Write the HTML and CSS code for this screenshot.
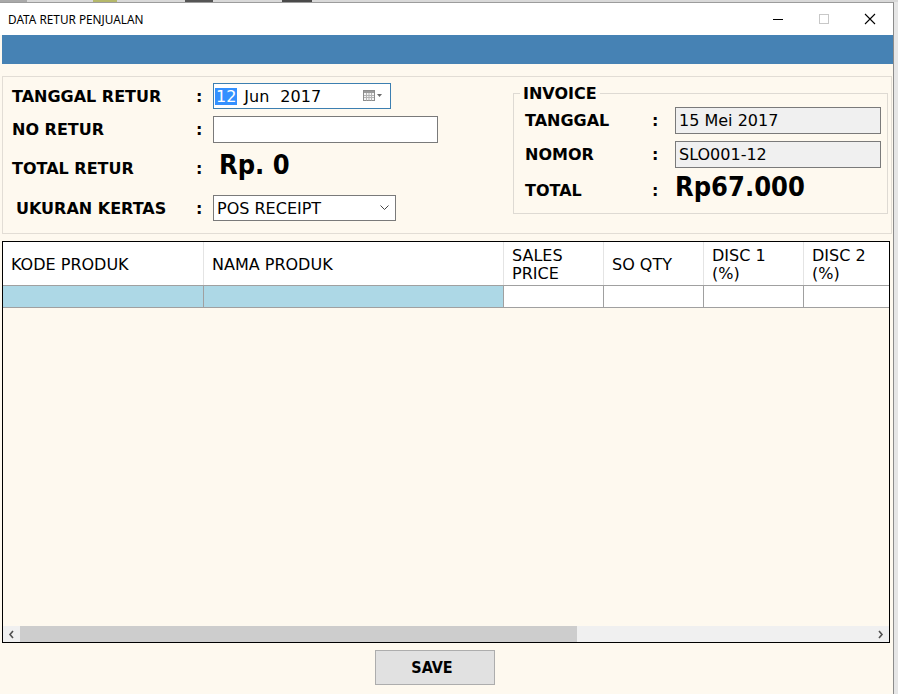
FILE: index.html
```html
<!DOCTYPE html>
<html>
<head>
<meta charset="utf-8">
<title>DATA RETUR PENJUALAN</title>
<link rel="stylesheet" href="styles.css">
</head>
<body>
<div class="desk">
  <span class="blob b1"></span><span class="blob b2"></span><span class="blob b3"></span><span class="blob b4"></span>
</div>
<div class="window">
  <div class="titlebar">
    <span class="title">DATA RETUR PENJUALAN</span>
    <div class="controls">
      <span class="ctl"><svg width="12" height="12" viewBox="0 0 12 12"><line x1="1" y1="6.5" x2="11" y2="6.5" stroke="#000" stroke-width="1"/></svg></span>
      <span class="ctl"><svg width="12" height="12" viewBox="0 0 12 12"><rect x="1.5" y="1.5" width="9" height="9" fill="none" stroke="#c8c8c8" stroke-width="1"/></svg></span>
      <span class="ctl"><svg width="12" height="12" viewBox="0 0 12 12"><path d="M1 1 L11 11 M11 1 L1 11" stroke="#000" stroke-width="1.1"/></svg></span>
    </div>
  </div>
  <div class="client">
    <div class="bluebar"></div>
    <div class="panel">
      <div class="left">
        <div class="row r1">
          <span class="lbl">TANGGAL RETUR</span><span class="colon">:</span>
          <div class="date">
            <span class="sel">12</span><span class="mon">Jun</span><span class="yr">2017</span>
            <span class="cal">
              <svg width="20" height="12" viewBox="0 0 20 12">
                <rect x="0.5" y="0.5" width="11" height="10" fill="#f4f4f4" stroke="#8c8c8c"/>
                <rect x="1" y="1" width="10" height="2" fill="#9a9a9a"/>
                <path d="M1 5.5 H11 M1 7.5 H11 M3.5 3 V10.5 M6 3 V10.5 M8.5 3 V10.5" stroke="#b4b4b4" stroke-width="1"/>
                <path d="M14 4 L19 4 L16.5 7 Z" fill="#6a6a6a"/>
              </svg>
            </span>
          </div>
        </div>
        <div class="row r2">
          <span class="lbl">NO RETUR</span><span class="colon">:</span>
          <div class="input wide"></div>
        </div>
        <div class="row r3">
          <span class="lbl">TOTAL RETUR</span><span class="colon">:</span>
          <span class="big">Rp. 0</span>
        </div>
        <div class="row r4">
          <span class="lbl ind">UKURAN KERTAS</span><span class="colon">:</span>
          <div class="select">
            <span>POS RECEIPT</span>
            <svg width="9" height="6" viewBox="0 0 9 6"><polyline points="0.5,0.5 4.5,4.5 8.5,0.5" fill="none" stroke="#444" stroke-width="1"/></svg>
          </div>
        </div>
      </div>
      <fieldset class="invoice">
        <legend>INVOICE</legend>
        <div class="irow i1">
          <span class="lbl">TANGGAL</span><span class="colon">:</span>
          <div class="input ro">15 Mei 2017</div>
        </div>
        <div class="irow i2">
          <span class="lbl">NOMOR</span><span class="colon">:</span>
          <div class="input ro">SLO001-12</div>
        </div>
        <div class="irow i3">
          <span class="lbl">TOTAL</span><span class="colon">:</span>
          <span class="big">Rp67.000</span>
        </div>
      </fieldset>
    </div>

    <div class="grid">
      <div class="ghead">
        <div class="hc">KODE PRODUK</div>
        <div class="hc">NAMA PRODUK</div>
        <div class="hc">SALES<br>PRICE</div>
        <div class="hc">SO QTY</div>
        <div class="hc">DISC 1<br>(%)</div>
        <div class="hc">DISC 2<br>(%)</div>
      </div>
      <div class="grow">
        <div class="dc blue"></div>
        <div class="dc blue"></div>
        <div class="dc"></div>
        <div class="dc"></div>
        <div class="dc"></div>
        <div class="dc"></div>
      </div>
      <div class="gbody"></div>
      <div class="hscroll">
        <span class="arrow"><svg width="7" height="9" viewBox="0 0 7 9"><polyline points="5,1 2,4.5 5,8" fill="none" stroke="#505050" stroke-width="1.6"/></svg></span>
        <span class="thumb"></span>
        <span class="track"></span>
        <span class="arrow"><svg width="7" height="9" viewBox="0 0 7 9"><polyline points="2,1 5,4.5 2,8" fill="none" stroke="#505050" stroke-width="1.6"/></svg></span>
      </div>
    </div>

    <div class="footer">
      <button class="save">SAVE</button>
    </div>
  </div>
</div>
</body>
</html>
```

FILE: styles.css
```css
* { box-sizing: border-box; margin: 0; padding: 0; }
html, body { width: 898px; height: 694px; overflow: hidden; }
body {
  background: #e6e6e6;
  font-family: "DejaVu Sans", Verdana, sans-serif;
  color: #000;
}

/* desktop strip behind the window */
.desk { height: 2px; background: #d9d9d9; display: flex; }
.blob { display: block; height: 2px; }
.b1 { width: 27px; background: #a9a9a9; }
.b2 { width: 24px; margin-left: 66px; background: #b5b86a; }
.b3 { width: 28px; margin-left: 68px; background: #555; }
.b4 { width: 30px; margin-left: 69px; background: #4a4a4a; }

.window {
  width: 894px;
  height: 692px;
  border-top: 1px solid #9c9c9c;
  border-right: 1px solid #8c8c8c;
  background: #fef9ef;
}

.titlebar {
  height: 32px;
  background: #fff;
  display: flex;
  align-items: center;
  justify-content: space-between;
}
.title {
  padding-left: 8px;
  font-family: "Noto Sans", "Open Sans", sans-serif;
  font-size: 11.8px;
  color: #000;
}
.controls { display: flex; height: 32px; }
.ctl { width: 46px; height: 32px; display: flex; align-items: center; justify-content: center; }

.client { padding-left: 2px; }
.bluebar { height: 29px; width: 891px; background: #4682b4; }

/* top panel */
.panel {
  margin-top: 12px;
  width: 890px;
  height: 158px;
  border: 1px solid #e2ddd5;
  display: flex;
}
.left { width: 510px; padding: 6px 0 0 9px; }
.row {
  display: grid;
  grid-template-columns: 184px 17px auto;
  align-items: center;
}
.lbl { font-weight: bold; font-size: 16px; line-height: 19px; white-space: nowrap; }
.lbl.ind { padding-left: 4px; }
.colon { font-weight: bold; font-size: 16px; line-height: 19px; }
.r1 { height: 26px; }
.r2 { height: 27px; margin-top: 7px; }
.r3 { margin-top: 7px; align-items: baseline; height: 30px; }
.r4 { height: 26px; margin-top: 15px; }

.big {
  font-family: "DejaVu Sans Condensed", "DejaVu Sans", sans-serif;
  font-stretch: condensed;
  font-weight: bold;
  font-size: 27px;
  line-height: 30px;
  white-space: nowrap;
}
.r3 .big { padding-left: 6px; }

.date {
  width: 178px;
  height: 26px;
  border: 1px solid #3c7fb1;
  background: #fff;
  display: flex;
  align-items: center;
  font-size: 16px;
  padding-left: 1px;
}
.date .sel { background: #3390ff; color: #fff; padding: 0 1px; line-height: 17px; }
.date .mon { margin-left: 7px; }
.date .yr { margin-left: 11px; }
.date .cal { margin-left: auto; margin-right: 7px; display: flex; }

.input {
  height: 27px;
  border: 1px solid #7a7a7a;
  background: #fff;
  font-size: 16px;
  line-height: 25px;
  padding-left: 3px;
}
.input.wide { width: 225px; }
.input.ro { background: #f0f0f0; width: 206px; }

.select {
  width: 183px;
  height: 26px;
  border: 1px solid #7a7a7a;
  background: #fff;
  display: flex;
  align-items: center;
  justify-content: space-between;
  font-size: 16px;
  padding: 0 6px 0 3px;
}

.invoice {
  margin-top: 9px;
  width: 375px;
  height: 128px;
  border: 1px solid #dedad3;
  padding: 0 0 0 11px;
}
.invoice legend {
  margin-left: -5px;
  padding: 0 3px;
  font-weight: bold;
  font-size: 16px;
  line-height: 15px;
}
.irow {
  display: grid;
  grid-template-columns: 127px 23px auto;
  align-items: center;
}
.i1 { margin-top: 6px; }
.i2 { margin-top: 7px; }
.i3 { margin-top: 4px; align-items: baseline; }

/* data grid */
.grid {
  margin-top: 7px;
  width: 888px;
  height: 402px;
  border: 1px solid #000;
  display: flex;
  flex-direction: column;
  overflow: hidden;
}
.ghead, .grow {
  display: grid;
  grid-template-columns: 201px 300px 100px 100px 100px 100px;
}
.ghead { height: 44px; background: #fff; border-bottom: 1px solid #a0a0a0; }
.hc {
  border-right: 1px solid #e4e4e4;
  display: flex;
  align-items: center;
  padding: 2px 0 0 8px;
  font-size: 16px;
  line-height: 18px;
  white-space: nowrap;
}
.grow { height: 22px; border-bottom: 1px solid #a0a0a0; }
.dc { background: #fff; border-right: 1px solid #a0a0a0; }
.dc.blue { background: #add8e6; }
.gbody { flex: 1; }
.hscroll { height: 16px; display: flex; background: #f0f0f0; }
.arrow { width: 17px; display: flex; align-items: center; justify-content: center; }
.thumb { width: 557px; background: #cdcdcd; }
.track { flex: 1; }

.footer { padding: 7px 0 0 373px; }
.save {
  width: 120px;
  height: 35px;
  background: #e1e1e1;
  border: 1px solid #adadad;
  padding-right: 6px;
  font-family: "DejaVu Sans Condensed", "DejaVu Sans", sans-serif;
  font-stretch: condensed;
  font-weight: bold;
  font-size: 16px;
  color: #000;
}
```
